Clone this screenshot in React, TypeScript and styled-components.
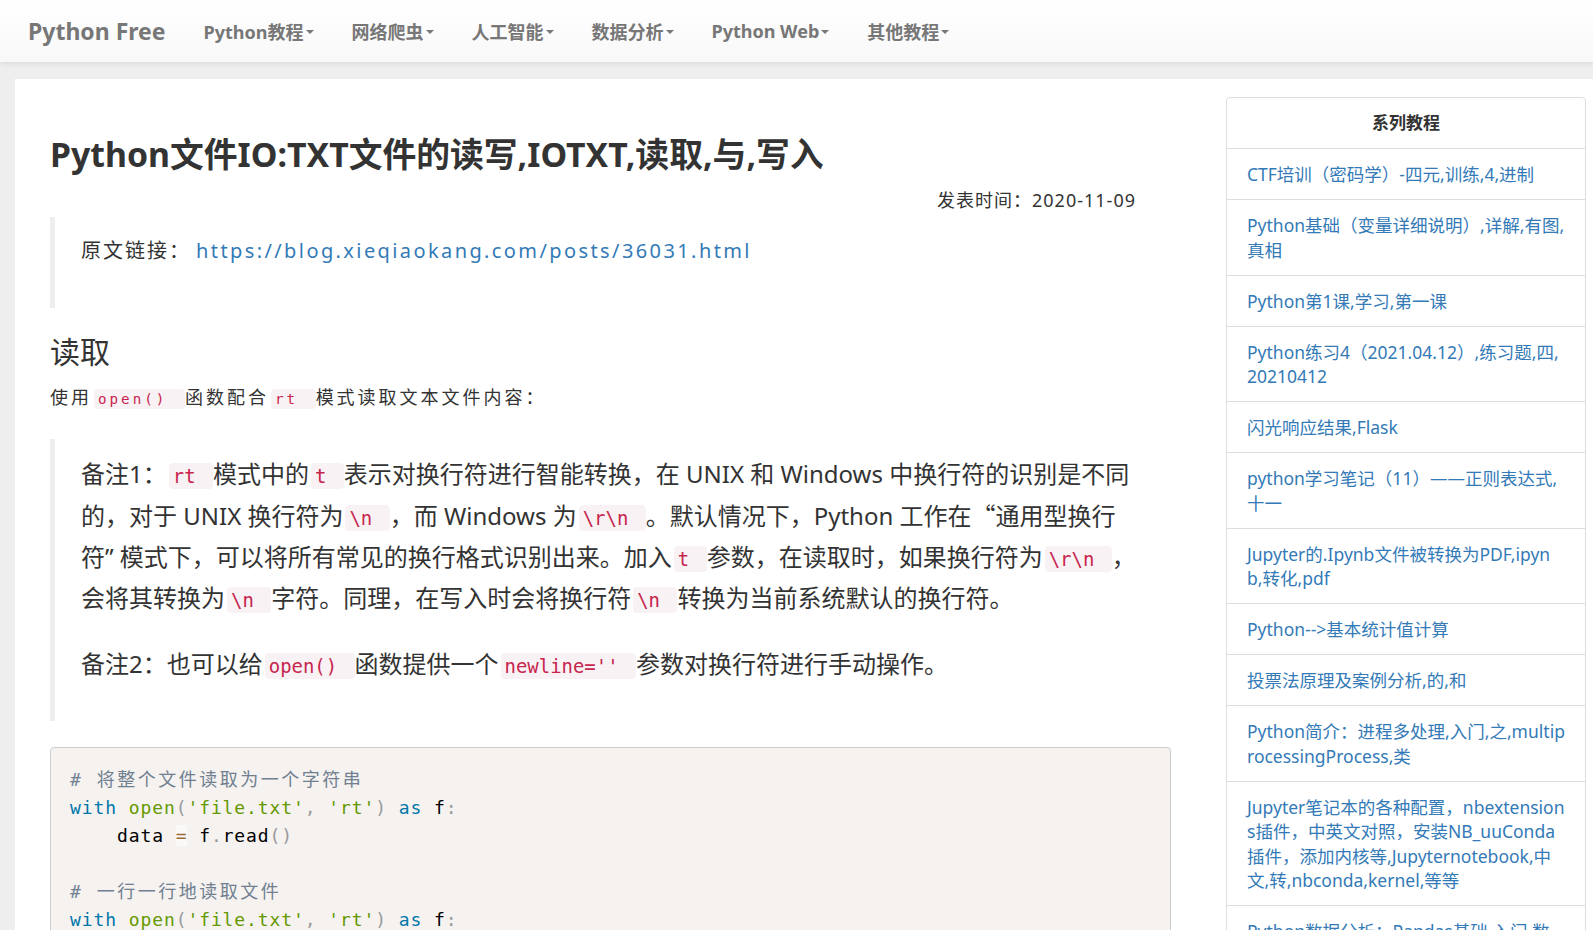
import React from "react";
import styled, { createGlobalStyle } from "styled-components";

const GlobalStyle = createGlobalStyle`
  * { box-sizing: border-box; }
  html, body { margin: 0; padding: 0; }
  body {
    background: #eee;
    color: #333;
    font-family: "Noto Sans", "Noto Sans CJK SC", sans-serif;
  }
`;

const Navbar = styled.header`
  position: relative;
  z-index: 1;
  height: 62px;
  display: flex;
  align-items: center;
  padding-left: 28px;
  background: linear-gradient(to bottom, #fff 0%, #f8f8f8 100%);
  box-shadow: 0 1px 6px rgba(0, 0, 0, 0.1);
`;

const Brand = styled.a`
  font-size: 23px;
  font-weight: 700;
  color: #777;
  padding-right: 19px;
  text-decoration: none;
`;

const NavList = styled.nav`
  display: flex;
  align-items: center;
`;

const NavItem = styled.a`
  display: flex;
  align-items: center;
  padding: 0 19px;
  font-size: 18px;
  font-weight: 700;
  color: #777;
  text-decoration: none;
`;

const Caret = styled.span`
  display: inline-block;
  width: 0;
  height: 0;
  margin-left: 2px;
  margin-top: 2px;
  border-top: 4px solid #777;
  border-left: 4px solid transparent;
  border-right: 4px solid transparent;
`;

const Page = styled.div`
  display: flex;
  align-items: flex-start;
  margin: 17px 0 0 15px;
  background: #fff;
  min-height: 900px;
`;

const Main = styled.main`
  flex: 0 0 1156px;
  padding-left: 35px;
`;

const Title = styled.h1`
  margin: 55px 0 0;
  font-size: 33.8px;
  font-weight: 700;
  line-height: 41px;
  color: #333;
`;

const Meta = styled.div`
  margin: 12px 0 3px;
  padding-right: 35px;
  text-align: right;
  font-size: 18px;
  letter-spacing: 1px;
  line-height: 27px;
`;

const Quote = styled.blockquote`
  margin: 0 0 26px;
  padding: 14px 0 12px 26px;
  border-left: 5px solid #eee;
`;

const QuoteP = styled.p<{ $size: number; $spacing: number; $lh: number }>`
  margin: 0 0 25px;
  font-size: ${(p) => p.$size}px;
  letter-spacing: ${(p) => p.$spacing}px;
  line-height: ${(p) => p.$lh}px;
`;

const Link = styled.a`
  margin-left: 5px;
  color: #337ab7;
  text-decoration: none;
  letter-spacing: 2.4px;
`;

const CjkQuote = styled.span`
  font-family: "Noto Sans CJK SC", sans-serif;
`;

const Heading = styled.h2`
  margin: 0 0 12px;
  font-size: 30px;
  font-weight: 400;
  line-height: 36px;
`;

const Para = styled.p`
  margin: 0 0 27px;
  font-size: 18px;
  letter-spacing: 3px;
  line-height: 30px;
`;

const Code = styled.code`
  font-family: "DejaVu Sans Mono", monospace;
  font-size: 0.79em;
  line-height: 1;
  color: #c7254e;
  background: #f9f2f4;
  border-radius: 4px;
  margin-left: 2px;
  padding: 2px 6px 2px 4px;
  &::after {
    content: "\\00a0";
  }
`;

const CodeBlock = styled.pre`
  margin: 0 0 30px;
  padding: 18px 19px;
  background: #f5f2f0;
  border: 1px solid #ccc;
  border-radius: 4px;
  font-family: "DejaVu Sans Mono", "Noto Sans CJK SC", monospace;
  font-size: 18px;
  letter-spacing: 0.9px;
  line-height: 28px;
  color: #000;
  overflow: hidden;
`;

const Tok = styled.span<{ $k: string }>`
  color: ${(p) =>
    ({ c: "#708090", k: "#0077aa", b: "#669900", s: "#669900", p: "#999", o: "#9a6e3a", n: "#000" } as Record<string, string>)[p.$k]};
  ${(p) => (p.$k === "c" ? "letter-spacing: 2.5px;" : "")}
  ${(p) => (p.$k === "o" ? "background: hsla(0,0%,100%,.5);" : "")}
`;

const Aside = styled.aside`
  flex: 0 0 360px;
  margin: 18px 0 0 55px;
  border: 1px solid #ddd;
  border-radius: 4px;
  background: #fff;
`;

const SideHeader = styled.div`
  padding: 13px 20px 12.5px;
  border-bottom: 1px solid #ddd;
  text-align: center;
  font-size: 17px;
  font-weight: 700;
  line-height: 24.5px;
  color: #333;
`;

const SideItem = styled.a`
  display: block;
  padding: 13px 20px 12.5px;
  border-bottom: 1px solid #ddd;
  font-size: 17.5px;
  line-height: 24.5px;
  color: #337ab7;
  text-decoration: none;
  word-break: break-all;
  &:last-child {
    border-bottom: none;
  }
`;

const navItems = ["Python教程", "网络爬虫", "人工智能", "数据分析", "Python Web", "其他教程"];

const sideItems = [
  "CTF培训（密码学）-四元,训练,4,进制",
  "Python基础（变量详细说明）,详解,有图,真相",
  "Python第1课,学习,第一课",
  "Python练习4（2021.04.12）,练习题,四,20210412",
  "闪光响应结果,Flask",
  "python学习笔记（11）——正则表达式,十一",
  "Jupyter的.Ipynb文件被转换为PDF,ipynb,转化,pdf",
  "Python-->基本统计值计算",
  "投票法原理及案例分析,的,和",
  "Python简介：进程多处理,入门,之,multiprocessingProcess,类",
  "Jupyter笔记本的各种配置，nbextensions插件，中英文对照，安装NB_uuConda插件，添加内核等,Jupyternotebook,中文,转,nbconda,kernel,等等",
  "Python数据分析：Pandas基础,入门,数据,处理",
];

type T = [string, string];
const withLine: T[] = [
  ["k", "with"], ["n", " "], ["b", "open"], ["p", "("], ["s", "'file.txt'"], ["p", ","], ["n", " "],
  ["s", "'rt'"], ["p", ")"], ["n", " "], ["k", "as"], ["n", " f"], ["p", ":"],
];
const codeLines: T[][] = [
  [["c", "# 将整个文件读取为一个字符串"]],
  withLine,
  [["n", "    data "], ["o", "="], ["n", " f"], ["p", "."], ["n", "read"], ["p", "()"]],
  [],
  [["c", "# 一行一行地读取文件"]],
  withLine,
  [["n", "    "], ["k", "for"], ["n", " line "], ["k", "in"], ["n", " f"], ["p", ":"]],
  [["n", "        "], ["b", "print"], ["p", "("], ["n", "line"], ["p", ","], ["n", " end"], ["o", "="], ["s", "''"], ["p", ")"]],
];

export default function App() {
  return (
    <>
      <GlobalStyle />
      <Navbar>
        <Brand href="#">Python Free</Brand>
        <NavList>
          {navItems.map((n) => (
            <NavItem key={n} href="#">
              {n}
              <Caret />
            </NavItem>
          ))}
        </NavList>
      </Navbar>
      <Page>
        <Main>
          <Title>Python文件IO:TXT文件的读写,IOTXT,读取,与,写入</Title>
          <Meta>发表时间：2020-11-09</Meta>
          <Quote>
            <QuoteP $size={20} $spacing={2} $lh={40}>
              原文链接：<Link href="#">https://blog.xieqiaokang.com/posts/36031.html</Link>
            </QuoteP>
          </Quote>
          <Heading>读取</Heading>
          <Para>
            使用<Code>open()</Code>函数配合<Code>rt</Code>模式读取文本文件内容：
          </Para>
          <Quote>
            <QuoteP $size={24} $spacing={0} $lh={41}>
              备注1：<Code>rt</Code>模式中的<Code>t</Code>表示对换行符进行智能转换，在 UNIX 和 Windows 中换行符的识别是不同
              <br />
              的，对于 UNIX 换行符为<Code>\n</Code>，而 Windows 为<Code>\r\n</Code>。默认情况下，Python 工作在<CjkQuote>“</CjkQuote>通用型换行
              <br />
              符” 模式下，可以将所有常见的换行格式识别出来。加入<Code>t</Code>参数，在读取时，如果换行符为<Code>\r\n</Code>，
              <br />
              会将其转换为<Code>\n</Code>字符。同理，在写入时会将换行符<Code>\n</Code>转换为当前系统默认的换行符。
            </QuoteP>
            <QuoteP $size={24} $spacing={0} $lh={41}>
              备注2：也可以给<Code>open()</Code>函数提供一个<Code>newline=''</Code>参数对换行符进行手动操作。
            </QuoteP>
          </Quote>
          <CodeBlock>
            {codeLines.map((line, i) => (
              <div key={i}>
                {line.length === 0
                  ? "\u00a0"
                  : line.map(([k, t], j) => (
                      <Tok key={j} $k={k}>
                        {t}
                      </Tok>
                    ))}
              </div>
            ))}
          </CodeBlock>
        </Main>
        <Aside>
          <SideHeader>系列教程</SideHeader>
          {sideItems.map((s) => (
            <SideItem key={s} href="#">
              {s}
            </SideItem>
          ))}
        </Aside>
      </Page>
    </>
  );
}
